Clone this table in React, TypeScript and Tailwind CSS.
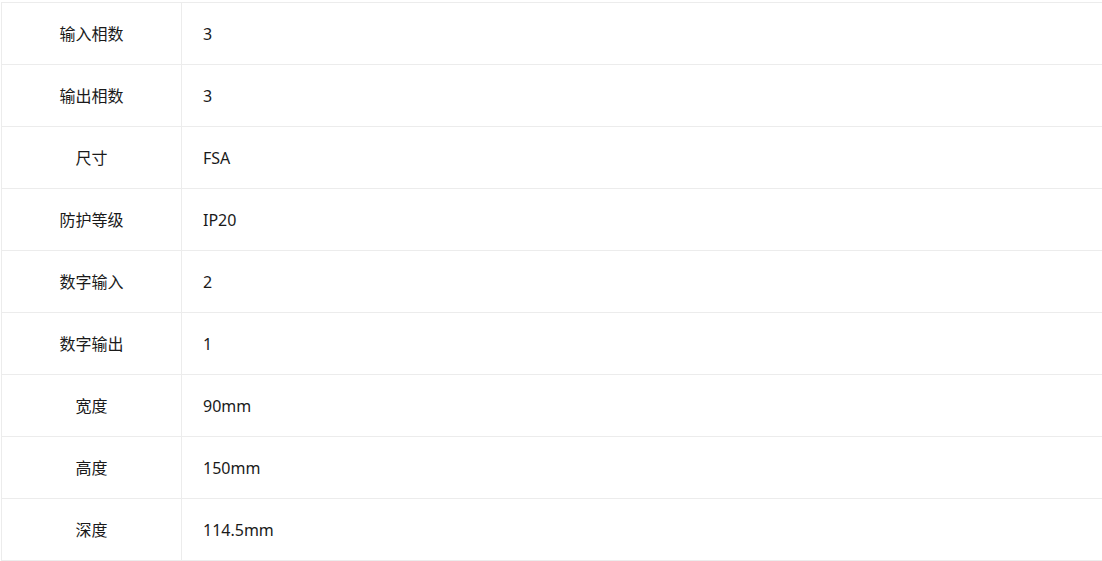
const rows: [string, string][] = [
  ["输入相数", "3"],
  ["输出相数", "3"],
  ["尺寸", "FSA"],
  ["防护等级", "IP20"],
  ["数字输入", "2"],
  ["数字输出", "1"],
  ["宽度", "90mm"],
  ["高度", "150mm"],
  ["深度", "114.5mm"],
];

export default function App() {
  return (
    <div
      className="w-[1102px] h-[561px] overflow-hidden bg-white pt-[2px] pl-px"
      style={{ fontFamily: '"Noto Sans", "Noto Sans CJK SC", sans-serif' }}
    >
      <div className="w-[1120px] border-t border-l border-[#ececec]">
        {rows.map(([k, v]) => (
          <div key={k} className="flex h-[62px] border-b border-[#ececec]">
            <div className="w-[180px] shrink-0 flex items-center justify-center border-r border-[#ececec] text-[16px] text-[#1a1a1a]">
              {k}
            </div>
            <div className="flex-1 flex items-center pl-[21px] text-[16px] text-[#1a1a1a]">
              {v}
            </div>
          </div>
        ))}
      </div>
    </div>
  );
}
